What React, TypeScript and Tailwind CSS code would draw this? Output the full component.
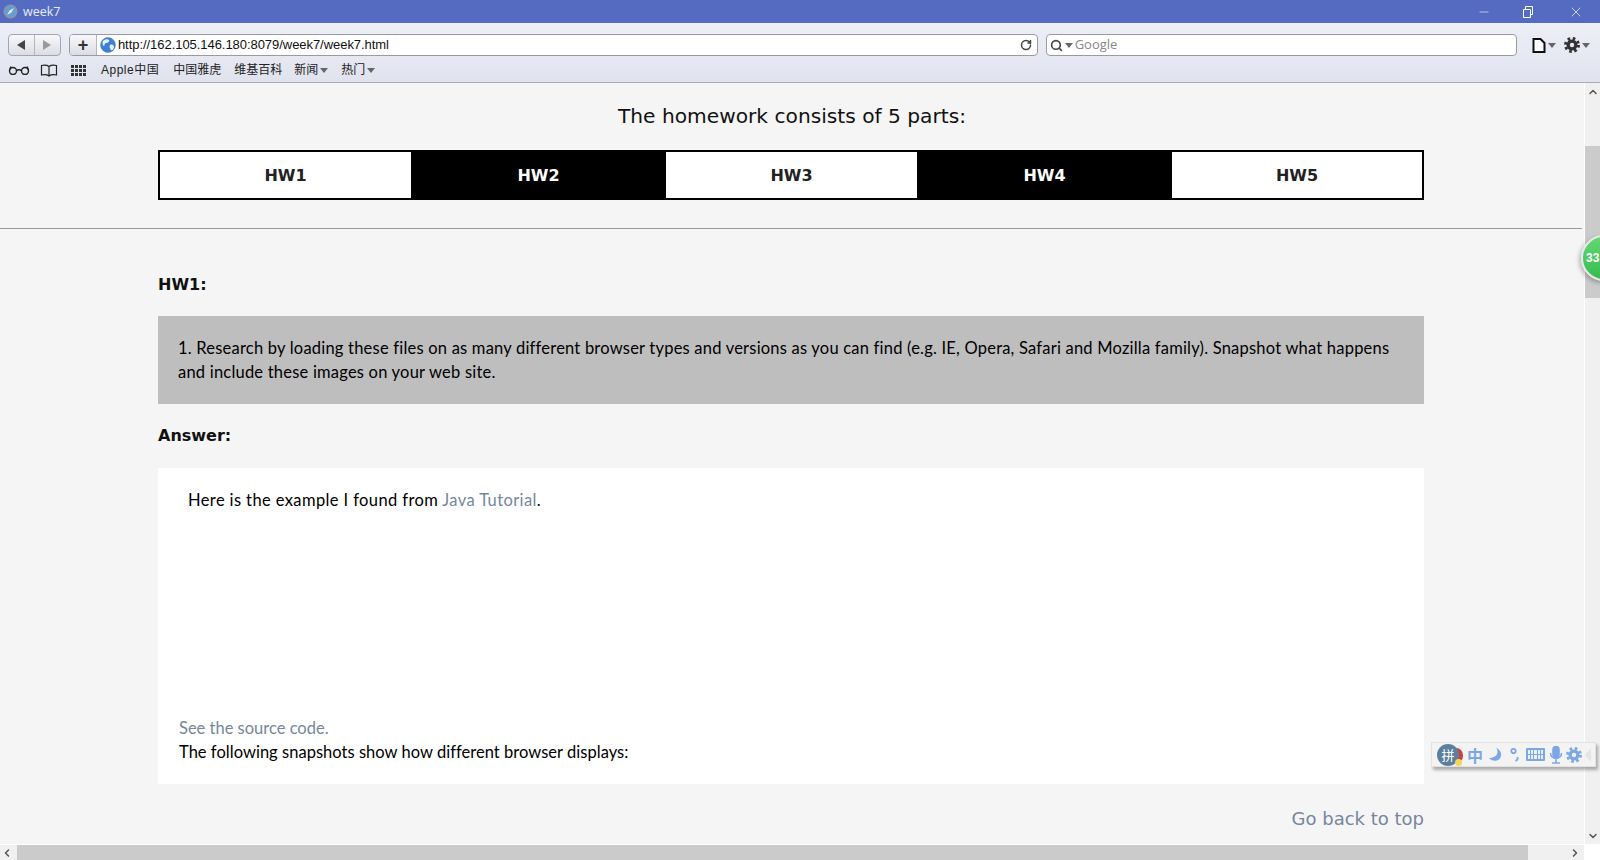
import { ChevronDown, ChevronLeft, ChevronRight, ChevronUp, Minus, RotateCw, Search, X } from "lucide-react";

const comic = "font-['Comic_Sans_MS','Lato',sans-serif]";
const cjk = "font-['Liberation_Sans','Noto_Sans_CJK_SC',sans-serif]";

const Caret = () => <span className="ml-[2px] border-x-[4px] border-t-[5px] border-x-transparent border-t-[#666] inline-block" />;

const Globe = () => (
  <svg width="16" height="16" viewBox="0 0 16 16" className="shrink-0">
    <circle cx="8" cy="8" r="7.500" fill="#3b82d6" stroke="#5b7fa8" strokeWidth="0.500" />
    <path d="M3 4c2-2 5-2 6-1s-1 3-3 3-1 3-2 3-2-3-1-5zM10 8c2-1 4 0 4 2s-2 4-3 3-2-4-1-5z" fill="#e8f1fb" />
  </svg>
);

const Compass = () => (
  <svg width="15" height="15" viewBox="0 0 15 15" className="shrink-0">
    <circle cx="7.500" cy="7.500" r="7" fill="#8b94a8" />
    <circle cx="7.500" cy="7.500" r="5" fill="#5aa0dc" />
    <path d="M11 4 8.500 8.500 4 11l2.500-4.500z" fill="#f0e6d2" />
  </svg>
);

const Gear = ({ color, hole, size }: { color: string; hole: string; size: number }) => (
  <svg width={size} height={size} viewBox="0 0 16 16" className="shrink-0">
    <circle cx="8" cy="8" r="5.500" fill={color} />
    <circle cx="8" cy="8" r="6.500" fill="none" stroke={color} strokeWidth="3" strokeDasharray="2.550 2.550" />
    <circle cx="8" cy="8" r="2.200" fill={hole} />
  </svg>
);

const Bookmarks = () => (
  <div className={`flex items-center text-[12px] text-[#222] h-[20px] -mt-[6px] pl-[8px] ${cjk}`}>
    <svg width="22" height="10" viewBox="0 0 22 10" className="mr-[10px]" fill="none" stroke="#222" strokeWidth="1.400">
      <circle cx="5" cy="6" r="3.500" />
      <circle cx="17" cy="6" r="3.500" />
      <path d="M8.500 5.500c1.500-1 3.500-1 5 0M1.500 5 3 1.500M20.500 5 19 1.500" />
    </svg>
    <svg width="18" height="13" viewBox="0 0 18 13" className="mr-[13px]" fill="none" stroke="#222" strokeWidth="1.200">
      <path d="M9 2.500C7 1 4 1 1.500 1.500v9.500C4 10.500 7 10.500 9 12c2-1.500 5-1.500 7.500-1V1.500C14 1 11 1 9 2.500zM9 2.500V12" />
    </svg>
    <div className="grid grid-cols-4 gap-[1px] w-[15px] mr-[15px]">
      {Array.from({ length: 12 }).map((_, i) => (
        <span key={i} className="w-[3px] h-[3px] bg-[#333]" />
      ))}
    </div>
    <span className="mr-[14px] tracking-[0.5px]">Apple中国</span>
    <span className="mr-[13px]">中国雅虎</span>
    <span className="mr-[12px]">维基百科</span>
    <span className="flex items-center mr-[13px]">新闻<Caret /></span>
    <span className="flex items-center">热门<Caret /></span>
  </div>
);

const Toolbar = () => (
  <div className="h-[60px] shrink-0 bg-gradient-to-b from-[#edeff7] to-[#e0e2ee] border-b border-[#a9abb8] flex flex-col">
    <div className="flex items-center h-[43px] pt-[1px] pl-[8px] pr-[10px] shrink-0">
      <div className="flex h-[22px] w-[53px] rounded-[4px] border border-[#a5a5ad] bg-gradient-to-b from-[#f8f8fb] to-[#dcdde4] mr-[8px]">
        <div className="flex-1 flex items-center justify-center border-r border-[#b5b5bd]">
          <span className="border-y-[5px] border-r-[8px] border-y-transparent border-r-[#444]" />
        </div>
        <div className="flex-1 flex items-center justify-center">
          <span className="border-y-[5px] border-l-[8px] border-y-transparent border-l-[#999]" />
        </div>
      </div>
      <div className="flex h-[22px] w-[970px] rounded-[4px] border border-[#9a9aa5] bg-white mr-[8px] overflow-hidden">
        <div className="w-[27px] flex items-center justify-center border-r border-[#b5b5bd] bg-gradient-to-b from-[#f8f8fb] to-[#dcdde4] text-[18px] leading-none text-[#333] font-['Liberation_Sans',sans-serif] font-bold">+</div>
        <div className="flex-1 flex items-center pl-[3px]">
          <Globe />
          <span className="ml-[2px] text-[13px] tracking-[-0.05px] text-[#111] font-['Liberation_Sans',sans-serif]">http://162.105.146.180:8079/week7/week7.html</span>
        </div>
        <div className="w-[22px] flex items-center justify-center">
          <RotateCw size={12} strokeWidth={3} className="text-[#444]" />
        </div>
      </div>
      <div className="flex items-center h-[22px] w-[472px] rounded-[4px] border border-[#9a9aa5] bg-white pl-[3px]">
        <Search size={13} strokeWidth={3} className="text-[#444]" />
        <Caret />
        <span className="ml-[2px] text-[13px] text-[#888] font-['Open_Sans',sans-serif]">Google</span>
      </div>
      <div className="ml-[15px] flex items-center">
        <svg width="14" height="15" viewBox="0 0 14 15" fill="#fff" stroke="#111" strokeWidth="2">
          <path d="M1.500 1h7l4 4v9h-11z" />
        </svg>
        <Caret />
      </div>
      <div className="ml-[8px] flex items-center">
        <Gear color="#333" hole="#e8e9f2" size={16} />
        <Caret />
      </div>
    </div>
    <Bookmarks />
  </div>
);

const navItems = ["HW1", "HW2", "HW3", "HW4", "HW5"];

const Page = () => (
  <div className="flex-1 min-w-0 bg-[#f5f5f5] flex flex-col">
    <div className="pt-[21px] text-center text-[20.200px] leading-[24px] text-[#111] font-['DejaVu_Sans',sans-serif]">
      The homework consists of 5 parts:
    </div>
    <div className="ml-[158px] w-[1266px] mt-[22px] h-[50px] border-2 border-black grid grid-cols-[251fr_255fr_251fr_255fr_250fr] bg-white">
      {navItems.map((name, i) => (
        <div
          key={name}
          className={`flex items-center justify-center pt-[1px] text-[16px] font-bold font-['DejaVu_Sans',sans-serif] ${i % 2 ? "bg-black text-white" : "bg-white text-[#222]"}`}
        >
          {name}
        </div>
      ))}
    </div>
    <div className="mt-[28px] h-px bg-[#999] mr-[2px]" />
    <div className="ml-[158px] w-[1266px]">
      <h3 className="mt-[46px] h-[20px] text-[16px] leading-[20px] font-bold text-[#111] font-['DejaVu_Sans',sans-serif]">HW1:</h3>
      <div className={`mt-[21px] h-[88px] bg-[#bebebe] pl-[20px] pr-[30px] pt-[20px] text-[16.500px] tracking-[0.21px] leading-[24px] text-black ${comic}`}>
        1. Research by loading these files on as many different browser types and versions as you can find (e.g. IE, Opera, Safari and Mozilla family). Snapshot what happens and include these images on your web site.
      </div>
      <h3 className="mt-[22px] h-[20px] text-[16px] leading-[20px] font-bold text-[#111] font-['DejaVu_Sans',sans-serif]">Answer:</h3>
      <div className={`mt-[22px] h-[316px] bg-white flex flex-col text-[16.500px] text-black ${comic}`}>
        <p className="pl-[30px] pt-[21px] leading-[22px] tracking-[0.39px]">
          Here is the example I found from <span className="text-[#76869c]">Java Tutorial</span>.
        </p>
        <div className="flex-1" />
        <p className="pl-[21px] leading-[24px] text-[#76869c]">See the source code.</p>
        <p className="pl-[21px] pb-[20px] leading-[24px] tracking-[0.03px]">The following snapshots show how different browser displays:</p>
      </div>
      <div className="mt-[23px] text-right text-[18px] leading-[24px] text-[#76869c] font-['DejaVu_Sans',sans-serif]">Go back to top</div>
    </div>
  </div>
);

const VScroll = () => (
  <div className="w-[16px] shrink-0 bg-[#f0f0f0] border-l border-white flex flex-col items-center">
    <ChevronUp size={12} strokeWidth={3} className="text-[#555] mt-[3px]" />
    <div className="w-full h-[152px] mt-[48px] bg-[#cbcbcb]" />
    <div className="flex-1" />
    <ChevronDown size={12} strokeWidth={3} className="text-[#555] mb-[2px]" />
  </div>
);

const HScroll = () => (
  <div className="h-[16px] shrink-0 bg-[#f0f0f0] border-t border-white flex items-center mr-[16px]">
    <ChevronLeft size={12} strokeWidth={3} className="text-[#555] ml-[1px] w-[12px]" />
    <div className="h-full w-[1511px] ml-[4px] bg-[#cbcbcb]" />
    <div className="flex-1" />
    <ChevronRight size={12} strokeWidth={3} className="text-[#555] mr-[3px]" />
  </div>
);

const ImeBar = () => (
  <div className="absolute left-[1431px] top-[742px] w-[165px] h-[25px] bg-[#f3f3f3] border border-[#e2e2e2] shadow-[2px_3px_3px_rgba(0,0,0,0.3)] flex items-center pl-[5px] text-[#7ba7e6]">
    <div className="relative w-[26px] h-[22px] shrink-0">
      <span className="absolute right-0 top-[4px] w-[14px] h-[15px] rounded-full bg-[#c8423f]" />
      <div className="absolute left-0 top-0 w-[22px] h-[22px] rounded-full bg-[#5d7f9f] text-white text-[13px] flex items-center justify-center font-['Noto_Sans_CJK_SC',sans-serif]">拼</div>
      <span className="absolute right-[1px] bottom-0 w-[7px] h-[7px] rounded-full bg-[#f3d65a]" />
    </div>
    <span className="ml-[4px] text-[16px] font-bold leading-none font-['Noto_Sans_CJK_SC',sans-serif]">中</span>
    <svg width="16" height="16" viewBox="0 0 16 16" className="ml-[4px]" fill="#7ba7e6">
      <path d="M9 1c3 3 2 10-7 10 2 3 10 5 12-2 1-4-2-7-5-8z" />
    </svg>
    <svg width="10" height="16" viewBox="0 0 10 16" className="ml-[7px]" fill="none" stroke="#7ba7e6" strokeWidth="1.800">
      <circle cx="3.500" cy="4" r="2.200" />
      <path d="M7.500 10c.5 2-.5 3.500-2 4" />
    </svg>
    <div className="ml-[6px] w-[19px] h-[13px] bg-[#7ba7e6] rounded-[1px] grid grid-cols-5 gap-[1px] p-[2px]">
      {Array.from({ length: 10 }).map((_, i) => (
        <span key={i} className="bg-[#e9f0fb]" />
      ))}
    </div>
    <svg width="14" height="18" viewBox="0 0 14 18" className="ml-[4px]" fill="none" stroke="#7ba7e6" strokeWidth="1.600">
      <rect x="4" y="0.500" width="6" height="11" rx="3" fill="#7ba7e6" />
      <path d="M1.500 7c0 7 11 7 11 0M7 13v4M3 17h8" />
    </svg>
    <div className="ml-[3px]"><Gear color="#7ba7e6" hole="#f3f3f3" size={16} /></div>
    <span className="ml-[3px] border-y-[7px] border-r-[6px] border-y-transparent border-r-[#e4e4e4]" />
  </div>
);

const Badge = () => (
  <div className="absolute left-[1581px] top-[235px] w-[46px] h-[46px] rounded-full border-2 border-[#e8e8e8] bg-gradient-to-b from-[#62d873] to-[#36bb50] shadow-[-2px_2px_4px_rgba(0,0,0,0.25)] flex items-center pl-[3px] text-[12px] text-white font-bold font-['Liberation_Sans',sans-serif]">
    33
  </div>
);

export default function App() {
  return (
    <div className="relative w-[1600px] h-[860px] overflow-hidden flex flex-col">
      <div className="h-[23px] shrink-0 bg-[#546bc1] flex items-center pl-[3px] text-white">
        <Compass />
        <span className="ml-[5px] pt-[1px] text-[12.500px] font-['Open_Sans',sans-serif] text-[#e8ecf8]">week7</span>
        <div className="flex-1" />
        <Minus size={14} strokeWidth={1} className="mr-[31px]" />
        <svg width="12" height="12" viewBox="0 0 12 12" fill="none" stroke="white" className="mr-[34px]">
          <path d="M1.500 3.500h7v8h-7zM3.500 3.500v-3h7v8h-2" />
        </svg>
        <X size={16} strokeWidth={1} className="mr-[16px]" />
      </div>
      <Toolbar />
      <div className="flex-1 min-h-0 flex">
        <Page />
        <VScroll />
      </div>
      <HScroll />
      <Badge />
      <ImeBar />
    </div>
  );
}
